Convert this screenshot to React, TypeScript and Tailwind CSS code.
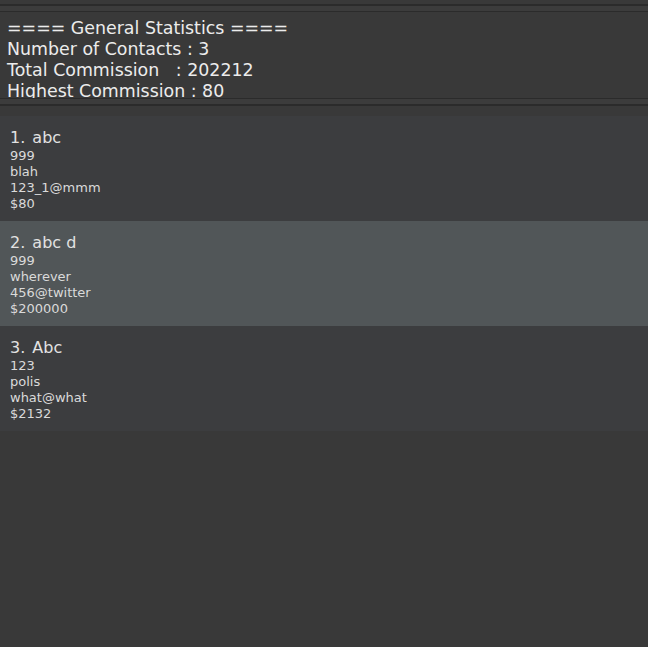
const stats = [
  '==== General Statistics ====',
  'Number of Contacts : 3',
  'Total Commission\u00a0\u00a0\u00a0: 202212',
  'Highest Commission : 80',
];

const contacts = [
  { name: 'abc', phone: '999', address: 'blah', email: '123_1@mmm', commission: '$80' },
  { name: 'abc d', phone: '999', address: 'wherever', email: '456@twitter', commission: '$200000' },
  { name: 'Abc', phone: '123', address: 'polis', email: 'what@what', commission: '$2132' },
];

const App = () => {
  return (
    <div
      className="w-[648px] h-[647px] bg-[#393939] overflow-hidden flex flex-col"
      style={{ fontFamily: '"DejaVu Sans", sans-serif' }}
    >
      <div className="h-[4px]" />
      <div className="h-[2px] bg-[#2b2b2b]" />
      <div className="h-[5px] bg-[#3c3c3c]" />
      <div className="h-[1px] bg-[#2b2b2b]" />

      <div className="h-[86px] overflow-hidden pt-[6px] px-[7px] text-[#ececec] text-[17.4px] leading-[21px]">
        {stats.map((line) => (
          <p key={line} className="whitespace-pre">
            {line}
          </p>
        ))}
      </div>

      <div className="h-[1px] bg-[#2b2b2b]" />
      <div className="h-[5px] bg-[#3c3c3c]" />
      <div className="h-[2px] bg-[#2b2b2b]" />
      <div className="h-[10px]" />

      <div className="flex flex-col">
        {contacts.map((c, i) => (
          <div
            key={c.name}
            className={`h-[105px] px-[10px] pt-[12px] ${
              i === 1 ? 'bg-[#515658]' : 'bg-[#3c3d3f]'
            }`}
          >
            <p className="text-[16px] leading-[20px] text-[#e2e2e2]">
              {i + 1}. <span className="ml-[2px]">{c.name}</span>
            </p>
            <div className="text-[13px] leading-[16px] text-[#dadada]">
              <p>{c.phone}</p>
              <p>{c.address}</p>
              <p>{c.email}</p>
              <p>{c.commission}</p>
            </div>
          </div>
        ))}
      </div>
    </div>
  );
};

export default App;
